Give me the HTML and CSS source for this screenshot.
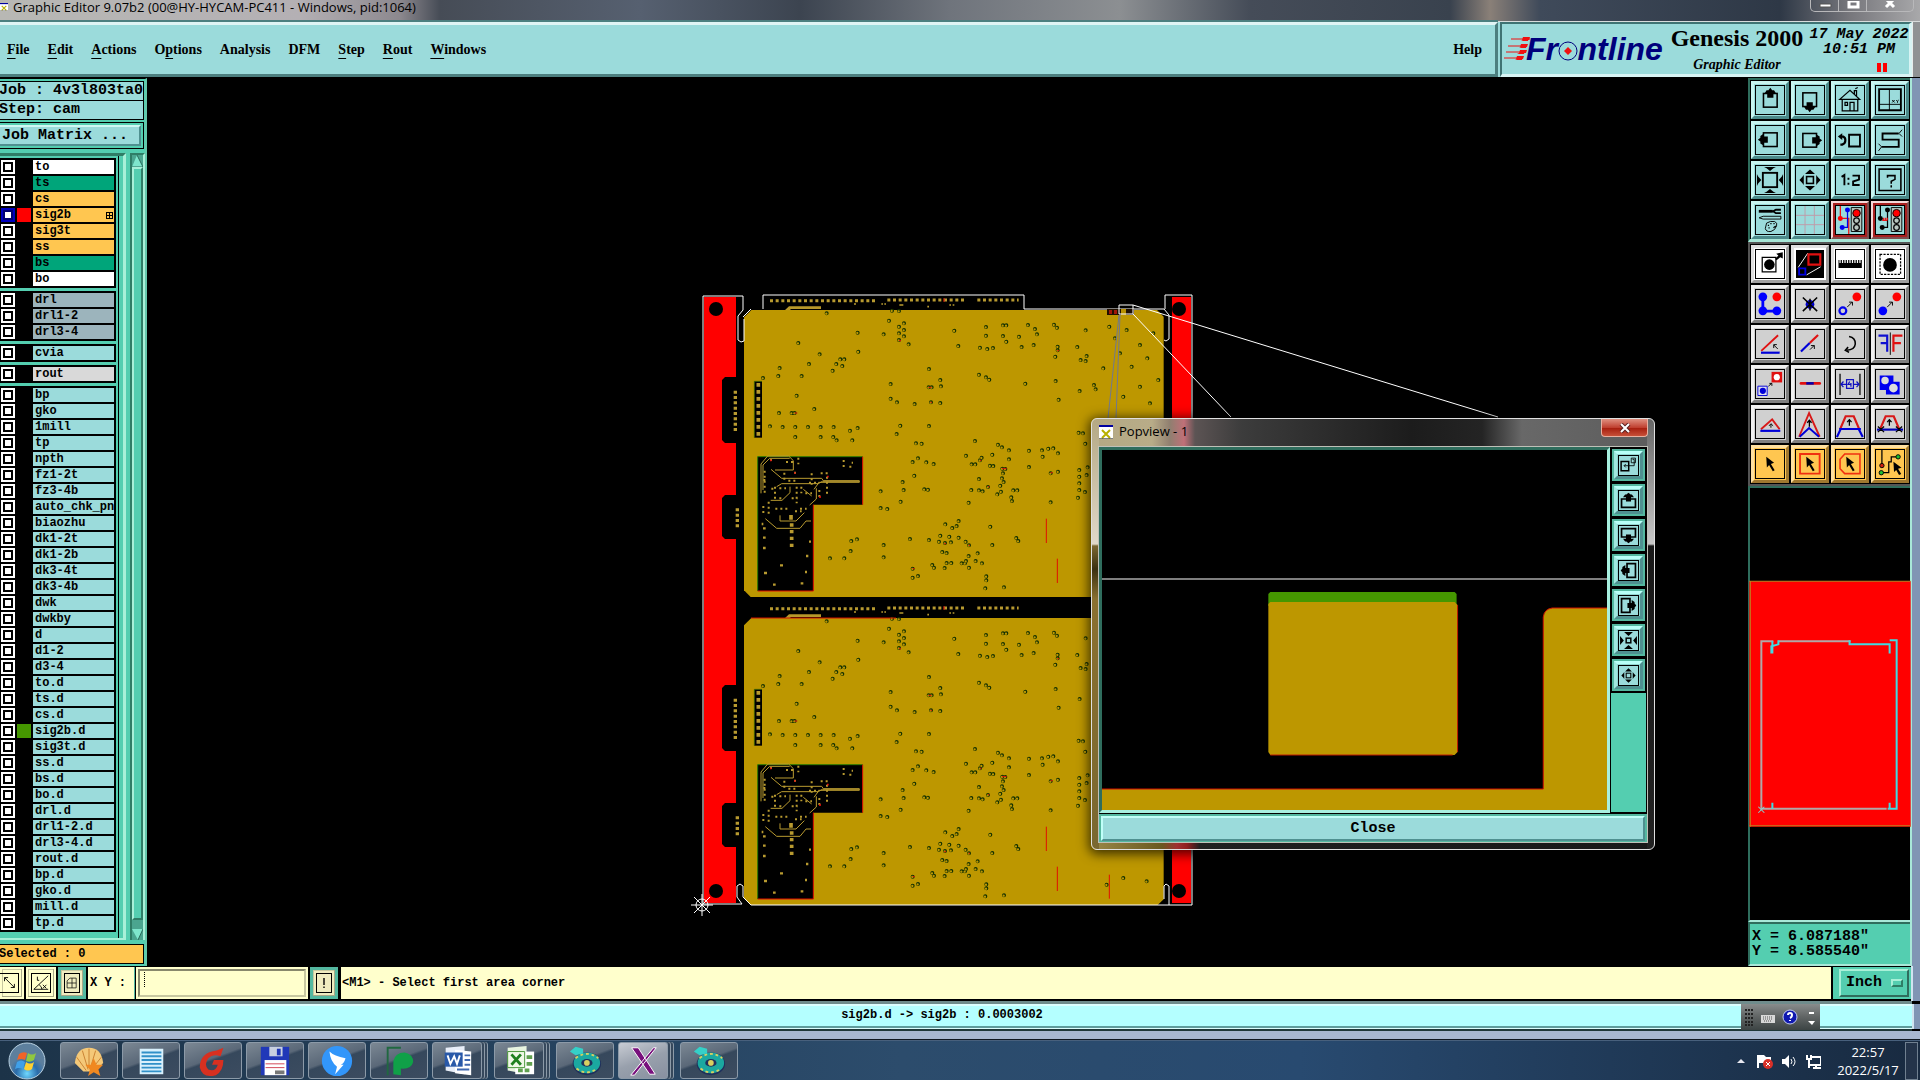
FILE: index.html
```html
<!DOCTYPE html>
<html lang="en">
<head>
<meta charset="utf-8">
<title>Graphic Editor 9.07b2</title>
<link rel="stylesheet" href="styles.css">
</head>
<body>
<svg class="defs" aria-hidden="true">
  <symbol id="i-up" viewBox="0 0 90 90"><rect x="24" y="24" width="44" height="44" fill="none" stroke="#000" stroke-width="5"/><path d="M46 6l6 8h6l6 9h-8v15H36V23h-8l6-9h6z"/></symbol>
  <symbol id="i-upb" viewBox="0 0 90 90"><path d="M12 38h66v40H12z" fill="none" stroke="#000" stroke-width="8"/><path d="M45 8l10 8h6l10 14H57v20H33V30H19l10-14h6z"/></symbol>
  <symbol id="i-in" viewBox="0 0 90 90"><rect x="22" y="22" width="46" height="46" fill="none" stroke="#000" stroke-width="6"/><path d="M26 3h38l-8 4-11 9-11-9zM26 87h38l-8-4-11-9-11 9zM3 26v38l4-8 10-11L7 34zM87 26v38l-4-8-10-11 10-11z"/></symbol>
  <symbol id="i-out" viewBox="0 0 90 90"><rect x="34" y="34" width="22" height="22" fill="none" stroke="#000" stroke-width="5"/><path d="M45 11l10 9 6 6H29l6-6zM45 79l10-9 6-6H29l6 6zM11 45l9-10 5-6v32l-5-6zM79 45l-9-10-5-6v32l5-6z"/></symbol>
  <symbol id="i-cur" viewBox="0 0 90 90"><path d="M33 22l25 19-10 4 12 20-6 3-12-20-7 8z"/></symbol>
  <symbol id="i-x" viewBox="0 0 14 14"><path d="M0 0h14v14H0z" fill="#fff"/><path d="M0 0h14v2H0z" fill="#0000a0"/><path d="M3 5l8 8M11 5l-8 8" stroke="#b8b000" stroke-width="2"/><path d="M0 14h14" stroke="#000"/></symbol>
  <symbol id="i-disc" viewBox="0 0 36 36"><ellipse cx="20" cy="21" rx="15" ry="12" fill="#20305c"/><ellipse cx="20" cy="20" rx="14" ry="11" fill="#1ba8a0"/><path d="M8 15q12-9 24 0M9 26q11 8 22 0" stroke="#d8d060" stroke-width="2" stroke-dasharray="3 3" fill="none"/><ellipse cx="20" cy="20" rx="6" ry="4" fill="#20305c"/><circle cx="20" cy="20" r="3" fill="#d8d060"/><path d="M2 8l6-5 8 2v5l-8 2z" fill="#35d0c8"/></symbol>
</svg>

<header class="titlebar">
  <svg class="app-icon" viewBox="0 0 14 14"><use href="#i-x"/></svg>
  <h1>Graphic Editor 9.07b2 (00@HY-HYCAM-PC411 - Windows, pid:1064)</h1>
  <div class="winctl">
    <button aria-label="Minimize"><svg viewBox="0 0 14 10"><path d="M2 3h11v3H2z" fill="#fff" stroke="#555"/></svg></button>
    <button aria-label="Restore"><svg viewBox="0 0 14 10"><path d="M3 0h9v6H3z" fill="none" stroke="#fff" stroke-width="3"/></svg></button>
    <button aria-label="Close window" class="wide"><svg viewBox="0 0 14 10"><path d="M3-2l8 8M11-2L3 6" stroke="#fff" stroke-width="3"/></svg></button>
  </div>
</header>

<div class="window">
<div class="topbar">
  <nav class="menubar">
    <a href="#"><u>F</u>ile</a><a href="#"><u>E</u>dit</a><a href="#"><u>A</u>ctions</a><a href="#">O<u>p</u>tions</a><a href="#">Analysis</a><a href="#">DFM</a><a href="#"><u>S</u>tep</a><a href="#"><u>R</u>out</a><a href="#"><u>W</u>indows</a><a href="#" class="help">Help</a>
  </nav>
  <div class="brand">
    <svg class="logo" viewBox="0 0 162 32">
      <path d="M5 5h19M2 12h19M0 18h19M-2 24h19" stroke="#f01010" stroke-width="1"/>
      <path d="M15 7l8-4-1 4zM13 14l8-4-1 4zM11 20l8-4-1 4zM9 26l8-4-1 4zM17 3h7l-1 3h-7zM15 10h7l-1 3h-7zM14 16h7l-1 3h-7zM11 22h7l-1 3h-7z" fill="#f01010"/>
      <text x="20" y="26" font-size="32">Fr<tspan fill="none">o</tspan>ntline</text>
      <circle cx="62" cy="17" r="9" fill="none" stroke="#00007c" stroke-width="1"/><path d="M62 13l4 4-4 4-4-4z" fill="#f01010"/>
    </svg>
    <div class="product"><strong>Genesis 2000</strong><em>Graphic Editor</em></div>
    <div class="clock"><span>17 May 2022</span><span>10:51 PM</span><i class="pause"></i></div>
  </div>
</div>

<main class="main">
  <aside class="sidebar">
    <div class="info"><p>Job : 4v3l803ta0</p><p>Step: cam</p></div>
    <div class="jm"><button>Job Matrix ...</button></div>
    <div class="lists">
      <div class="listframe"><div class="list">
        <div class="group">
          <label><input type="checkbox"><i></i><span class="w">to</span></label>
          <label><input type="checkbox"><i></i><span class="g">ts</span></label>
          <label><input type="checkbox"><i></i><span class="o">cs</span></label>
          <label><input type="checkbox" class="active"><i class="red"></i><span class="o grid">sig2b</span></label>
          <label><input type="checkbox"><i></i><span class="o">sig3t</span></label>
          <label><input type="checkbox"><i></i><span class="o">ss</span></label>
          <label><input type="checkbox"><i></i><span class="g">bs</span></label>
          <label><input type="checkbox"><i></i><span class="w">bo</span></label>
        </div>
        <div class="group">
          <label><input type="checkbox"><i></i><span class="d">drl</span></label>
          <label><input type="checkbox"><i></i><span class="d">drl1-2</span></label>
          <label><input type="checkbox"><i></i><span class="d">drl3-4</span></label>
        </div>
        <div class="group"><label><input type="checkbox"><i></i><span>cvia</span></label></div>
        <div class="group"><label><input type="checkbox"><i></i><span class="r">rout</span></label></div>
        <div class="group">
          <label><input type="checkbox"><i></i><span>bp</span></label>
          <label><input type="checkbox"><i></i><span>gko</span></label>
          <label><input type="checkbox"><i></i><span>1mill</span></label>
          <label><input type="checkbox"><i></i><span>tp</span></label>
          <label><input type="checkbox"><i></i><span>npth</span></label>
          <label><input type="checkbox"><i></i><span>fz1-2t</span></label>
          <label><input type="checkbox"><i></i><span>fz3-4b</span></label>
          <label><input type="checkbox"><i></i><span>auto_chk_pnl</span></label>
          <label><input type="checkbox"><i></i><span>biaozhu</span></label>
          <label><input type="checkbox"><i></i><span>dk1-2t</span></label>
          <label><input type="checkbox"><i></i><span>dk1-2b</span></label>
          <label><input type="checkbox"><i></i><span>dk3-4t</span></label>
          <label><input type="checkbox"><i></i><span>dk3-4b</span></label>
          <label><input type="checkbox"><i></i><span>dwk</span></label>
          <label><input type="checkbox"><i></i><span>dwkby</span></label>
          <label><input type="checkbox"><i></i><span>d</span></label>
          <label><input type="checkbox"><i></i><span>d1-2</span></label>
          <label><input type="checkbox"><i></i><span>d3-4</span></label>
          <label><input type="checkbox"><i></i><span>to.d</span></label>
          <label><input type="checkbox"><i></i><span>ts.d</span></label>
          <label><input type="checkbox"><i></i><span>cs.d</span></label>
          <label><input type="checkbox"><i class="green"></i><span>sig2b.d</span></label>
          <label><input type="checkbox"><i></i><span>sig3t.d</span></label>
          <label><input type="checkbox"><i></i><span>ss.d</span></label>
          <label><input type="checkbox"><i></i><span>bs.d</span></label>
          <label><input type="checkbox"><i></i><span>bo.d</span></label>
          <label><input type="checkbox"><i></i><span>drl.d</span></label>
          <label><input type="checkbox"><i></i><span>drl1-2.d</span></label>
          <label><input type="checkbox"><i></i><span>drl3-4.d</span></label>
          <label><input type="checkbox"><i></i><span>rout.d</span></label>
          <label><input type="checkbox"><i></i><span>bp.d</span></label>
          <label><input type="checkbox"><i></i><span>gko.d</span></label>
          <label><input type="checkbox"><i></i><span>mill.d</span></label>
          <label><input type="checkbox"><i></i><span>tp.d</span></label>
        </div>
      </div></div>
      <div class="scroll">
        <button aria-label="Scroll up"><svg viewBox="0 0 11 12"><path d="M5 0L0 12h11z" fill="#7fe6cc"/><path d="M5 0l6 12H0" fill="none" stroke="#2b6b5b"/></svg></button>
        <div class="thumb"></div>
        <button aria-label="Scroll down"><svg viewBox="0 0 11 12"><path d="M0 1h11L6 12z" fill="#7fe6cc"/><path d="M11 1L6 12" stroke="#2b6b5b"/></svg></button>
      </div>
    </div>
    <div class="selected">Selected : 0</div>
  </aside>

  <section class="canvas">
    <svg class="board" viewBox="147 78 1601 888">
      <path d="M704 297h32v606h-32zM1172 297h19v606h-19z" fill="#f00"/>
      <g><circle cx="716" cy="309" r="7"/><circle cx="716" cy="891" r="7"/><circle cx="1179" cy="309" r="7"/><circle cx="1179" cy="891" r="7"/></g>
      <path d="M736 377h-11l-3 3v60l3 3h11zM736 495h-11l-3 3v38l3 3h11zM736 685h-11l-3 3v60l3 3h11zM736 803h-11l-3 3v38l3 3h11z"/>
      <defs>
      <path id="vias" d="M503 158h0M325 189h0M389 223h0M505 215h0M357 252h0M269 264h0M265 288h0M335 288h0M320 347h0M219 294h0M373 387h0M267 399h0M305 399h0M314 399h0M410 100h0M240 439h0M278 441h0M316 441h0M354 441h0M392 441h0M431 441h0M316 471h0M392 471h0M430 471h0M440 481h0M487 481h0M480 452h0M503 444h0M428 272h0M439 252h0M451 238h0M463 238h0M457 258h0M597 122h0M581 163h0M627 93h0M606 92h0M642 130h0M642 150h0M642 169h0M627 140h0M627 160h0M627 180h0M656 193h0M793 152h0M805 198h0M888 141h0M888 167h0M939 136h0M949 136h0M939 168h0M949 185h0M870 203h0M892 207h0M909 204h0M1014 135h0M1035 147h0M1041 163h0M987 170h0M995 201h0M1031 195h0M1092 134h0M1101 143h0M1187 151h0M1103 200h0M1103 211h0M1096 230h0M1162 201h0M1190 228h0M1172 240h0M1187 243h0M717 267h0M751 300h0M753 319h0M716 322h0M725 322h0M867 284h0M888 292h0M898 299h0M1006 311h0M1097 303h0M1169 333h0M1212 315h0M1217 328h0M602 312h0M602 356h0M621 367h0M674 372h0M723 367h0M751 369h0M1106 359h0M631 437h0M717 438h0M620 462h0M678 490h0M695 491h0M668 546h0M684 535h0M709 547h0M731 552h0M673 587h0M638 606h0M641 630h0M703 628h0M714 629h0M632 665h0M572 634h0M572 684h0M592 687h0M855 483h0M924 494h0M936 502h0M957 511h0M907 524h0M875 533h0M870 541h0M828 527h0M845 553h0M856 553h0M900 557h0M910 558h0M957 538h0M937 566h0M946 567h0M939 580h0M936 595h0M941 606h0M931 617h0M894 621h0M867 597h0M867 631h0M878 634h0M844 630h0M836 668h0M922 643h0M933 635h0M970 631h0M982 631h0M964 652h0M966 663h0M1017 512h0M1017 561h0M1056 511h0M1058 530h0M1075 506h0M1090 505h0M1104 520h0M1082 580h0M1104 575h0M1082 667h0M1186 491h0M1166 458h0M1179 460h0M1168 570h0M1168 590h0M1168 610h0M1168 630h0M1164 653h0M1185 636h0M1193 562h0M1190 585h0M501 778h0M484 783h0M482 813h0M463 835h0M420 835h0M581 795h0M581 832h0M660 777h0M717 780h0M766 733h0M787 744h0M800 738h0M806 723h0M751 767h0M778 770h0M747 785h0M765 789h0M783 787h0M806 773h0M827 785h0M837 796h0M757 816h0M770 819h0M836 828h0M863 820h0M828 843h0M857 843h0M876 850h0M770 849h0M784 849h0M815 850h0M825 850h0M727 855h0M732 863h0M764 864h0M837 863h0M668 866h0M668 893h0M684 888h0M901 740h0M907 795h0M979 774h0M985 783h0M889 889h0M889 901h0M886 925h0M942 922h0M1240 265h0M1258 140h0M1275 175h0M1290 220h0M1310 150h0M1325 260h0M1350 195h0M1372 235h0M1390 160h0M1405 300h0M1350 320h0M1300 350h0M1380 370h0M1250 890h0M1300 870h0M1370 880h0"/>
      <g id="unit">
        <path d="M162 112l22-22h1217l20 20v824l-18 17H182l-20-20z" fill="#bd9700"/>
        <path d="M285 90l12-11h96v8h-90l-4 4z" fill="#b8982a"/>
        <path d="M240 62H562M592 60H830M862 60H986" stroke="#b89a30" stroke-width="9" stroke-dasharray="9 8"/>
        <path d="M492 72h6M574 72h5M583 72h5M628 75h12M712 80h5M778 75h5M788 75h5" stroke="#b89a30" stroke-width="5"/>
        <path d="M762 55v10" stroke="#d02010" stroke-width="4"/>
        <path d="M136 332v128M142 685v58" stroke="#b89a30" stroke-width="10" stroke-dasharray="9 7"/>
        <g class="ring"><use href="#vias" stroke="#123000" stroke-width="12"/><use href="#vias" stroke="#bd9700" stroke-width="7" transform="translate(-1 1)"/></g>
        <path d="M314 399h8M716 322h8M936 566h14M1082 578h6M722 367h4M627 182h6M1102 212h5M870 541h4M836 796h4M668 866h6M763 791h5M894 620h4" stroke="#e01010" stroke-width="3"/>
        <path d="M193 304h23v169h-23z"/><path d="M193 473V304h23" fill="none" stroke="#3a7000" stroke-width="2"/>
        <path d="M205 309v160" stroke="#b89a30" stroke-width="11" stroke-dasharray="11 10"/>
        <path d="M203 530h315v144H370v259H203z"/>
        <path d="M203 933V530h315" fill="none" stroke="#2f7a00" stroke-width="3"/><path d="M518 530v144M370 674v259H203" fill="none" stroke="#e01000" stroke-width="3"/>
        <g fill="none" stroke="#b89a30" stroke-width="3"><path d="M213 640v-88l20-24h63l14 14v28h-55M219 630v-75l20-20h60M243 568l32 27h120l5 7h108v5H385M260 620l15-9h110l12-7h110M300 620v18l-24 23h-34M340 628l25 20M379 625v32l-20 18M270 706v17h48l25-25M226 716l34 29h70l18-22h15M388 606l-16 22"/></g>
        <path d="M224 572v70M240 540h10M288 546h25M325 533v20M255 620v40M355 567h0M283 578v30M295 602h25M312 578h10M320 620v50M334 620v20M357 608h30M365 580v34M392 580h25M411 590v60M388 630v25M305 655h18M220 678v30M236 665v40M256 686h40M271 652v12M315 694h20M330 686h20M461 540v25M478 560h8M507 536h0M485 548h4M346 640h20M220 600h10M268 625h20M244 626h10" stroke="#b89a30" stroke-width="6" stroke-dasharray="6 9"/>
        <path d="M303 705v14M305 730v10M305 750v10M305 770v10M305 791v10" stroke="#b89a30" stroke-width="11"/>
        <path d="M219 745h8M219 773h8M219 804h8M222 879h9M249 914h8M270 856h9M332 910h8M348 828h7M357 785h6M345 876h6M215 732h5" stroke="#b89a30" stroke-width="7"/>
        <path d="M312 579h5M240 541h5M411 590h5M390 648v6" stroke="#e01010" stroke-width="5"/>
        <path d="M1069 716v73M1102 836v73M1258 860v72" stroke="#e01000" stroke-width="3"/>
      </g>
      </defs>
      <svg x="690" y="280" width="480" height="340" viewBox="0 0 1440 1020"><use href="#unit"/></svg>
      <svg x="690" y="588" width="480" height="340" viewBox="0 0 1440 1020"><use href="#unit"/></svg>
      <path d="M751 618h145" stroke="#d01000"/>
      <path d="M703 905V296h40v14l-5 6v24l3 2 3-1v-22M751 309l-8 8M763 309V295h261v14h140M1164 309l5 6v24l-3 2-2-1M1165 309v-14h27v610H751l-8-8v-11l-3-2-3 2v11l5 7h-38M1169 905v-19l-3-2-2 2v13" fill="none" stroke="#fff"/>
      <path d="M1107 309h27v6h-27z" fill="#201000"/><path d="M1109 310h3v4h-3zM1114 310h3v4h-3z" fill="#a01808"/><path d="M1121 309h5v6h-5z" fill="#b89000"/>
      <path d="M1119 305h14v9h-14zM1133 305l365 112M1133 314l98 103" fill="none" stroke="#fff"/>
      <path d="M1119 315l-11 103M1120 315l-4 103" stroke="#707890" fill="none"/>
      <g fill="none" stroke="#fff"><circle cx="702" cy="905" r="6"/><path d="M691 905h22M702 894v22M694 897l16 16M710 897l-16 16"/></g>
    </svg>

    <section class="popview" aria-label="Popview">
      <div class="pop-title"><svg viewBox="0 0 14 14"><use href="#i-x"/></svg><h2>Popview - 1</h2><button aria-label="Close popview"><svg viewBox="0 0 12 10"><path d="M2 1l8 8M10 1L2 9" stroke="#5a2020" stroke-width="4"/><path d="M2 1l8 8M10 1L2 9" stroke="#fff" stroke-width="2"/></svg></button></div>
      <div class="pop-body">
        <svg class="pop-canvas" viewBox="0 0 507 360" preserveAspectRatio="none">
          <path d="M0 129h507" stroke="#fff"/>
          <path d="M167 144l2-2h185l2 2v12H167z" fill="#459700"/>
          <path d="M167 154l2-2h185l3 3v147l-3 3H169l-2-3z" fill="#bd9700"/>
          <path d="M357 155v147M169 305h183" stroke="#c01800" fill="none"/>
          <path d="M0 339h443V167q1-8 9-9h55v202H0z" fill="#bd9700"/><path d="M0 339h443V167q1-8 9-9h55" fill="none" stroke="#d01000"/>
        </svg>
        <div class="pop-tools">
          <div><button aria-label="Pan window"><svg viewBox="0 0 90 90"><path d="M10 26h36v44H10z" fill="none" stroke="#000" stroke-width="7"/><path d="M58 10h20v22H58zM64 16h8v30H24M32 38l-8 8 8 8" fill="none" stroke="#000" stroke-width="4"/></svg></button></div>
          <div><button aria-label="Pan up"><svg><use href="#i-upb"/></svg></button></div>
          <div><button aria-label="Pan down"><svg class="r180"><use href="#i-upb"/></svg></button></div>
          <div><button aria-label="Pan left"><svg class="r270"><use href="#i-upb"/></svg></button></div>
          <div><button aria-label="Pan right"><svg class="r90"><use href="#i-upb"/></svg></button></div>
          <div><button aria-label="Zoom in"><svg viewBox="0 0 90 90"><rect x="34" y="34" width="22" height="22" fill="none" stroke="#000" stroke-width="7"/><path d="M24 5h42L45 24zM24 85h42L45 66zM5 24v42l18-21zM85 24v42L67 45z"/></svg></button></div>
          <div><button aria-label="Zoom out"><svg><use href="#i-out"/></svg></button></div>
        </div>
        <div class="pop-close"><button>Close</button></div>
      </div>
    </section>
  </section>

  <aside class="right">
    <div class="tools cyan">
      <button aria-label="Pan up"><svg><use href="#i-up"/></svg></button>
      <button aria-label="Pan down"><svg class="r180"><use href="#i-up"/></svg></button>
      <button aria-label="Home"><svg viewBox="0 0 90 90" fill="none" stroke="#000" stroke-width="4"><path d="M12 43L45 14l31 29zM20 43v37h50V43M29 53h8v9h-8zM45 80V53h13v27M59 26V15h7v19M62 9l8-4"/></svg></button>
      <button aria-label="Coordinates"><svg viewBox="0 0 90 90"><path d="M10 10h70v68H10z" fill="none" stroke="#000" stroke-width="6"/><path d="M43 10v68M10 59h70M52 45l8 8M60 45l-8 8M65 45l4 4 4-4M69 49v5" fill="none" stroke="#000" stroke-width="3"/></svg></button>
      <button aria-label="Pan left"><svg class="r270"><use href="#i-up"/></svg></button>
      <button aria-label="Pan right"><svg class="r90"><use href="#i-up"/></svg></button>
      <button aria-label="Previous view"><svg viewBox="0 0 90 90" fill="none" stroke="#000"><path d="M42 28h35v38H42z" stroke-width="6"/><path d="M14 34h9q8 4 7 13 0 10-10 13h-6" stroke-width="7"/><path d="M6 34l14-11v22z" fill="#000" stroke="none"/></svg></button>
      <button aria-label="Serpentine"><svg viewBox="0 0 90 90" fill="none" stroke="#000"><path d="M73 24H21v20h52v23H18" stroke-width="6"/><path d="M84 12l-10 12 10 10M8 57l10 10L8 80" stroke-width="3"/></svg></button>
      <button aria-label="Zoom in"><svg><use href="#i-in"/></svg></button>
      <button aria-label="Zoom out"><svg><use href="#i-out"/></svg></button>
      <button aria-label="Scale"><svg viewBox="0 0 90 90" fill="none" stroke="#000" stroke-width="6"><path d="M18 35l9-6v33M40 38v6M40 54v6M53 31h21v13l-19 6v11h21"/></svg></button>
      <button aria-label="Query"><svg viewBox="0 0 90 90" fill="none" stroke="#000" stroke-width="5"><path d="M10 10h70v69H10z"/><path d="M37 38v-7h24v12l-12 6v8M49 62v7"/></svg></button>
      <button aria-label="Setup"><svg viewBox="0 0 90 90" fill="none" stroke="#000"><path d="M9 17h45" stroke-width="9"/><path d="M80 12H64l-9 5 9 6h16" stroke-width="6"/><path d="M10 38l13-5h57v9H23z" stroke-width="3"/><path d="M30 72l4-17q12-8 26-5 10 4 6 14-4 14-18 18-16 2-18-10z" stroke-width="3"/><path d="M38 62h4M46 57h4M56 57h4M40 70h4M56 70l8-6" stroke-width="4"/></svg></button>
      <button aria-label="Grid"><svg viewBox="0 0 90 90"><path d="M29 0v90M59 0v90M0 30h90M0 60h90" stroke="#c09aa8" stroke-width="3"/></svg></button>
      <button aria-label="Net check" class="alert"><svg viewBox="0 0 90 90"><path d="M14 0v40h27v50" fill="none" stroke="#f01010" stroke-width="4"/><path d="M37 13v56H20" fill="none" stroke="#0000e8" stroke-width="4"/><circle cx="14" cy="40" r="8" fill="#f00"/><g fill="#0000f0"><circle cx="37" cy="13" r="8"/><circle cx="20" cy="69" r="8"/></g><path d="M49 5h34v77H49z" fill="#b8c8c0" stroke="#000" stroke-width="3"/><circle cx="66" cy="23" r="12" fill="#f00" stroke="#000" stroke-width="3"/><g fill="none" stroke="#000" stroke-width="4"><circle cx="66" cy="47" r="9"/><circle cx="66" cy="69" r="9"/></g></svg></button>
      <button aria-label="Short check" class="alert"><svg viewBox="0 0 90 90"><path d="M14 0v40M37 13v56H20" fill="none" stroke="#000" stroke-width="4"/><path d="M20 46h16M24 46v-8M30 46v-8M36 46v-8" stroke="#f01010" stroke-width="4"/><circle cx="14" cy="40" r="8"/><circle cx="37" cy="13" r="8"/><circle cx="20" cy="69" r="8"/><path d="M49 5h34v77H49z" fill="#b8c8c0" stroke="#000" stroke-width="3"/><circle cx="66" cy="23" r="12" fill="#f00" stroke="#000" stroke-width="3"/><g fill="none" stroke="#000" stroke-width="4"><circle cx="66" cy="47" r="9"/><circle cx="66" cy="69" r="9"/></g></svg></button>
    </div>
    <div class="tools grey">
      <button class="white" aria-label="Move feature"><svg viewBox="0 0 90 90"><path d="M20 24h44v46H20z" fill="none" stroke="#000" stroke-width="4"/><circle cx="43" cy="47" r="17"/><path d="M62 28l10-10-7-6 21-5v20l-8-4-12 10z"/></svg></button>
      <button class="white dark" aria-label="Popview"><svg viewBox="0 0 90 90"><path d="M0 0h90v90H0z"/><path d="M7 56L38 10M34 80l45-26" stroke="#fff" stroke-width="3"/><path d="M40 14h38v33H40z" fill="none" stroke="#e01010" stroke-width="7"/><path d="M10 59h20v20H10z" fill="none" stroke="#0000e0" stroke-width="6"/></svg></button>
      <button class="white" aria-label="Measure"><svg viewBox="0 0 90 90"><path d="M8 32v26h75V32h-4v10h-4V32h-4v10h-4V32h-4v10h-4V32h-4v10h-4V32h-4v10h-4V32h-4v10h-4V32h-4v10h-4V32h-4v10h-4V32h-4v10h-4V32z"/></svg></button>
      <button class="white" aria-label="Select"><svg viewBox="0 0 90 90"><path d="M13 14h66v64H13z" fill="none" stroke="#000" stroke-width="4" stroke-dasharray="7 4"/><circle cx="45" cy="48" r="22"/></svg></button>
      <button aria-label="Polyline"><svg viewBox="0 0 90 90"><path d="M22 22v46h45" fill="none" stroke="#00f" stroke-width="9"/><g fill="#00f"><circle cx="22" cy="22" r="14"/><circle cx="22" cy="67" r="14"/><circle cx="67" cy="67" r="14"/></g><circle cx="67" cy="22" r="14" fill="#f00"/></svg></button>
      <button aria-label="Delete"><svg viewBox="0 0 90 90"><circle cx="45" cy="46" r="14" fill="#00c"/><path d="M22 24l46 44M68 24L22 68M45 28v38" stroke="#000" stroke-width="5"/></svg></button>
      <button aria-label="Copy"><svg viewBox="0 0 90 90"><circle cx="67" cy="22" r="14" fill="#f00"/><circle cx="22" cy="67" r="11" fill="none" stroke="#00e" stroke-width="7"/><path d="M36 55l16-16M42 39h11v11" fill="none" stroke="#000" stroke-width="3"/></svg></button>
      <button aria-label="Move"><svg viewBox="0 0 90 90"><circle cx="67" cy="22" r="14" fill="#f00"/><circle cx="22" cy="67" r="14" fill="#00f"/><path d="M36 55l16-16M42 39h11v11" fill="none" stroke="#000" stroke-width="3"/></svg></button>
      <button aria-label="Rotate"><svg viewBox="0 0 90 90"><path d="M17 67l54-50" stroke="#e01010" stroke-width="6"/><path d="M16 73h60" stroke="#0000d8" stroke-width="7"/><path d="M70 61L57 48M57 58V47h10" fill="none" stroke="#000" stroke-width="3"/></svg></button>
      <button aria-label="Stretch"><svg viewBox="0 0 90 90"><path d="M44 42l27-26" stroke="#e01010" stroke-width="7"/><path d="M16 69l28-27" stroke="#0000d8" stroke-width="7"/><path d="M45 63l13-13M48 50h11v11" fill="none" stroke="#000" stroke-width="3"/></svg></button>
      <button aria-label="Arc"><svg viewBox="0 0 90 90"><path d="M42 21q21 4 20 24-2 19-27 20M39 55L30 65l12 7" fill="none" stroke="#000" stroke-width="5"/></svg></button>
      <button aria-label="Mirror"><svg viewBox="0 0 90 90" fill="none" stroke-width="7"><path d="M8 18h28v52M15 42h20" stroke="#1010d0"/><path d="M46 8v72" stroke="#000" stroke-width="3"/><path d="M85 18H56v52M58 42h22" stroke="#e01010"/></svg></button>
      <button aria-label="Copy step"><svg viewBox="0 0 90 90"><path d="M50 6h34v34H50z" fill="#e01010"/><circle cx="67" cy="23" r="10" fill="#fff"/><path d="M6 52h30v30H6z" fill="#dde" stroke="#0000d8" stroke-width="3"/><circle cx="22" cy="67" r="10" fill="#0000d8"/><path d="M40 52l10-9M43 43h8v8" fill="none" stroke="#000" stroke-width="3"/></svg></button>
      <button aria-label="Line width"><svg viewBox="0 0 90 90"><path d="M16 43h60" stroke="#e01010" stroke-width="9" stroke-linecap="round"/><path d="M33 43h24" stroke="#0000b0" stroke-width="8"/></svg></button>
      <button aria-label="Spacing"><svg viewBox="0 0 90 90" fill="none" stroke-width="4"><path d="M13 12v68M77 12v68" stroke="#000"/><path d="M16 46h18M56 46h18M24 37l-8 9 8 9M66 37l8 9-8 9M34 31h22v28H34zM44 37l-5 9h11M48 42v12" stroke="#1010c0"/></svg></button>
      <button aria-label="Surface"><svg viewBox="0 0 90 90"><path d="M12 18h44v20h20v41H32V64H12z" fill="#0000f0"/><circle cx="29" cy="34" r="12" fill="#ddd"/><circle cx="56" cy="58" r="14" fill="#ddd"/></svg></button>
      <button aria-label="Triangle"><svg viewBox="0 0 90 90" fill="none" stroke-width="6"><path d="M16 62l36-32 24 32" stroke="#d81818"/><path d="M14 67h64" stroke="#0000d8" stroke-width="7"/><path d="M48 57V46M42 51l6-7 7 7" stroke="#000" stroke-width="3"/></svg></button>
      <button aria-label="Peak"><svg viewBox="0 0 90 90" fill="none" stroke-width="6"><path d="M10 86L42 10l34 76" stroke="#d81818"/><path d="M12 86l30-28 32 28" stroke="#0000d8"/><path d="M43 54V34M36 41l7-8 7 8" stroke="#000" stroke-width="4"/></svg></button>
      <button aria-label="Trapezoid"><svg viewBox="0 0 90 90" fill="none" stroke-width="7"><path d="M14 60l17-40h26l17 40" stroke="#d81818"/><path d="M3 87l12-26h58l13 26M10 61h70" stroke="#0000d8"/><path d="M43 51V32M36 39l7-8 7 8" stroke="#000" stroke-width="4"/></svg></button>
      <button aria-label="Trim"><svg viewBox="0 0 90 90" fill="none" stroke-width="7"><path d="M14 60l17-40h26l17 40" stroke="#d81818"/><path d="M3 63h84" stroke="#0000b0"/><path d="M6 53l20 18M26 53L6 71M64 53l20 18M84 53L64 71M43 51V32M36 39l7-8 7 8" stroke="#000" stroke-width="4"/></svg></button>
      <button class="orange" aria-label="Pick"><svg><use href="#i-cur"/></svg></button>
      <button class="orange" aria-label="Pick in frame"><svg viewBox="0 0 90 90"><path d="M13 13h63v63H13z" fill="none" stroke="#f03010" stroke-width="6"/><use href="#i-cur"/></svg></button>
      <button class="orange" aria-label="Pick in polygon"><svg viewBox="0 0 90 90"><path d="M13 30l15-17h49v63H28L13 60z" fill="none" stroke="#f03010" stroke-width="5"/><use href="#i-cur"/></svg></button>
      <button class="orange" aria-label="Pick net"><svg viewBox="0 0 90 90"><path d="M19 0v50M19 73h22V38h8V22h22" fill="none" stroke="#000" stroke-width="4"/><circle cx="19" cy="50" r="7" fill="#d02010" stroke="#000" stroke-width="3"/><circle cx="17" cy="73" r="7" fill="#20c030" stroke="#000" stroke-width="3"/><circle cx="71" cy="22" r="7" fill="#20c030" stroke="#000" stroke-width="3"/><path d="M56 38l26 19-11 3 10 17-7 3-9-16-7 7z"/></svg></button>
    </div>
    <div class="overview"><svg viewBox="1751 489 159 431">
      <path d="M1750 582h161v245h-161z" fill="#f00"/><path d="M1750 582h161M1750 826h161M1751 582v245" stroke="#c08020" fill="none"/>
      <path d="M1774 642h-12v167h125M1779 642h72" fill="none" stroke="#b0a8a8" stroke-width="2"/>
      <path d="M1779 641v4l-7 2v7M1850 641v4h40v9M1890 641h7v168h-9M1773 642v12M1773 803v6M1890 803v6" fill="none" stroke="#40dce4" stroke-width="2"/>
      <path d="M1759 807l6 6M1765 807l-6 6" stroke="#80d8d8"/>
    </svg></div>
    <div class="coords"><span>X = 6.087188"</span><span>Y = 8.585540"</span></div>
  </aside>
</main>

<div class="status">
  <button class="sb first" aria-label="Snap"><svg viewBox="0 0 20 20"><path d="M5 4l11 11M5 8V4h4M16 11v4h-4" fill="none" stroke="#000"/></svg></button>
  <button class="sb" aria-label="Angle"><svg viewBox="0 0 20 20"><path d="M2 17L18 2M2 17h16M6 3v4h2M8 12q3 2 3 5M12 12l4 4M16 12l-4 4" fill="none" stroke="#000"/></svg></button>
  <button class="sb teal" aria-label="Grid snap"><svg viewBox="0 0 20 20"><path d="M3 7l4-4h9v14H3zM3 10h13M10 3v14" fill="none" stroke="#000"/></svg></button>
  <label for="xy">X Y :</label><div class="xy"><input id="xy" type="text"><i></i></div>
  <button class="sb teal bang" aria-label="Apply"><svg viewBox="0 0 20 20"><path d="M9 3h2v10H9zM9 15h2v2H9z"/></svg></button>
  <p>&lt;M1&gt; - Select first area corner</p>
  <div class="unit"><button>Inch<i></i></button></div>
</div>
<div class="message"><p>sig2b.d -&gt; sig2b : 0.0003002</p>
  <div class="ime"><svg viewBox="0 0 79 26"><path d="M4 6h9M4 10h9M4 14h9M4 18h9M4 21h9" stroke="#222" stroke-width="2" stroke-dasharray="2 1"/><path d="M20 11h14v8H20z" fill="#d8d8d8"/><path d="M22 13h10M22 15h10M23 17h8" stroke="#555" stroke-dasharray="1 1"/><circle cx="49" cy="13" r="7" fill="#1018b0" stroke="#c0c8f0"/><path d="M47 11q0-2 2-2t2 2-2 3M49 16v1" fill="none" stroke="#fff" stroke-width="2"/><path d="M68 8h5v2h-5zM67 17h7l-3 4z" fill="#fff"/></svg></div>
</div>
</div>

<footer class="taskbar">
  <button class="start" aria-label="Start"><svg viewBox="0 0 38 38"><defs><radialGradient id="orb" cy=".85"><stop offset="0" stop-color="#6fd8ff"/><stop offset=".6" stop-color="#2a6cab"/><stop offset="1" stop-color="#5d7f9d"/></radialGradient></defs><circle cx="19" cy="19" r="18" fill="url(#orb)" stroke="#b8d0e0"/><path d="M11 12q4-3 8-1l-2 7q-4-2-8 0z" fill="#f06428"/><path d="M20 11q4 3 8 0l-2 7q-4 3-8 1z" fill="#90c840"/><path d="M9 20q4-3 8 0l-2 7q-4-2-8 0z" fill="#40a0e8"/><path d="M18 20q4 3 8 0l-2 7q-4 3-8 0z" fill="#ffd030"/></svg></button>
  <button class="app" aria-label="Shell"><svg viewBox="0 0 36 36"><path d="M18 4q13 0 15 16l-8 9H12L3 20Q5 4 18 4z" fill="#f4c878"/><path d="M18 5v20M11 7l6 20M25 7l-6 20M5 14l10 14M31 14L20 28" stroke="#c88030" stroke-width="1"/><path d="M23 15l3 7h7l-5 5 2 7-7-4-6 4 2-7-5-5h6z" fill="#f08820"/></svg></button>
  <button class="app" aria-label="Notepad"><svg viewBox="0 0 36 36"><path d="M6 5h25v27H6z" fill="#d8f0fc"/><path d="M8 9h21M8 13h21M8 17h21M8 21h21M8 25h21M8 29h21" stroke="#3090c8" stroke-width="2"/></svg></button>
  <button class="app" aria-label="Gcam"><svg viewBox="0 0 36 36"><path d="M29 4l-3 9q-8-3-13 2-5 7 0 12 8 3 10-5h-6l2-5h10q0 12-8 16-14 4-17-8 0-16 18-18z" fill="#d83020"/></svg></button>
  <button class="app" aria-label="Floppy"><svg viewBox="0 0 36 36"><path d="M3 3h30v30H3z" fill="#2038b8"/><path d="M12 3h14v10H12z" fill="#c8d0e0"/><path d="M20 5h4v7h-4z" fill="#2038b8"/><path d="M7 17h23v16H7z" fill="#fff"/><path d="M8 21h20M8 25h20" stroke="#d04050"/><path d="M18 28h10v4H18z" fill="#777"/></svg></button>
  <button class="app" aria-label="Messenger"><svg viewBox="0 0 36 36"><circle cx="18" cy="18" r="16" fill="#3296fa"/><path d="M10 8q5 5 17 7-1 5-5 7h3l-9 10 2-8q-7-5-8-16z" fill="#fff"/></svg></button>
  <button class="app" aria-label="Pads"><svg viewBox="0 0 36 36"><path d="M6 33V4h14" fill="none" stroke="#206840" stroke-width="2"/><path d="M12 32V18q2-9 12-9 9 2 9 10-2 8-13 7v7z" fill="#10a048"/></svg></button>
  <button class="app stack" aria-label="Word"><svg viewBox="0 0 36 36"><path d="M6 4l20-2v30L6 28z" fill="#e8eef8"/><path d="M16 6l17 2v25l-17-2z" fill="#fff"/><path d="M26 12h6M26 17h6M26 22h6M18 27h13" stroke="#4068b0" stroke-width="2"/><path d="M5 9h19v15H5z" fill="#2858a8"/><path d="M8 12l3 9 4-8 3 8 3-9" fill="none" stroke="#fff" stroke-width="2"/></svg></button>
  <button class="app stack" aria-label="Excel"><svg viewBox="0 0 36 36"><path d="M6 4l20-2v30L6 28z" fill="#e8f4e0"/><path d="M14 8h20v24H14z" fill="#fff"/><path d="M17 26h5v4h-5zM24 26h5v4h-5zM26 19h6v4h-6zM26 12h6v4h-6z" fill="#60a050"/><path d="M6 8h18v17H6z" fill="#f0f8e8" stroke="#409030"/><path d="M10 11l10 11M20 11L10 22" stroke="#208020" stroke-width="3"/></svg></button>
  <button class="app" aria-label="Genesis"><svg><use href="#i-disc"/></svg></button>
  <button class="app stack on" aria-label="X server"><svg viewBox="0 0 36 36"><path d="M6 4h7l18 28h-6zM29 4h3L9 33H5z" fill="#78107c" stroke="#fff" stroke-width="1"/></svg></button>
  <button class="app" aria-label="Genesis editor"><svg><use href="#i-disc"/></svg></button>
  <div class="tray">
    <svg viewBox="0 0 84 20"><path d="M0 12l4-4 4 4z" fill="#e8e8f0"/><path d="M21 4v13" stroke="#fff" stroke-width="2"/><path d="M22 4h5l2 2h5v7h-6l-2-1h-4z" fill="#fff"/><circle cx="31" cy="13" r="5" fill="#d83028"/><path d="M29 11l4 4M33 11l-4 4" stroke="#fff" stroke-width="1"/><path d="M45 8h3l4-4v13l-4-4h-3z" fill="#fff"/><path d="M54 8q2 3 0 5M56 6q4 5 0 9" fill="none" stroke="#fff"/><path d="M74 6h10v8H73M76 17h8M79 14v3M70 4v4h4V4M72 8v9" fill="none" stroke="#fff" stroke-width="2"/></svg>
    <time><span>22:57</span><span>2022/5/17</span></time>
    <button class="desk" aria-label="Show desktop"></button>
  </div>
</footer>
</body>
</html>
```
FILE: styles.css
```css
* { box-sizing: border-box; }
body, h1, h2, p { margin: 0; }
body {
  min-height: 100vh;
  display: flex;
  flex-direction: column;
  background: #000;
  color: #000;
  font: bold 12px/14px "Liberation Mono", monospace;
}
button, input { font: inherit; color: inherit; border: 0; padding: 0; margin: 0; background: none; border-radius: 0; }
svg { display: block; }
.defs { position: absolute; width: 0; height: 0; }

/* Window title */
.titlebar {
  height: 22px;
  display: flex;
  align-items: flex-start;
  border-bottom: 1px solid #d8dcdc;
  background: linear-gradient(90deg, #b8b8b4 0, #b4b0b4 300px, #8c888e 400px, #464c56 440px, #566070 640px, #3c4450 800px, #6f747c 950px, #8c8f92 1120px, #454c58 1250px, #39424e 1450px, #8a8078 1490px, #3f4a5a 1540px, #2e3846 1780px, #77777c 1850px, #a8a8aa 100%);
}
.app-icon { width: 8px; height: 14px; flex: none; }
.titlebar h1 { margin-left: 5px; font: 13px/14px "Open Sans", sans-serif; white-space: nowrap; }
.winctl { margin: 0 6px 0 auto; display: flex; border: 1px solid #b8b8ba; border-top: 0; border-radius: 0 0 5px 5px; height: 12px; }
.winctl button { width: 28px; border-right: 1px solid #b8b8ba; display: grid; place-items: center; }
.winctl .wide { width: 46px; border: 0; }
.winctl svg { width: 14px; height: 10px; }

.window { flex: 1; display: flex; flex-direction: column; border-bottom: 8px solid #a8b8d0; }

/* Menu and brand */
.topbar { display: flex; height: 56px; margin-right: 8px; background: #9bdbdb; border-bottom: 1px solid #000; position: relative; }
.topbar::after { content: ""; position: absolute; left: 100%; top: 0; width: 8px; height: 100%; background: #909294; border-left: 1px solid #e8ecec; }
.menubar {
  flex: 1;
  display: flex;
  align-items: center;
  gap: 18px;
  padding: 0 13px 0 7px;
  border-top: 3px solid #e0f4f4;
  border-right: 3px solid #4c7f7f;
  border-bottom: 3px solid #4c7f7f;
  box-shadow: 0 -2px 0 #4c7f7f;
  font: bold 14px/18px "Liberation Serif", serif;
}
.menubar a { color: inherit; text-decoration: none; }
.menubar u { text-underline-offset: 4px; text-decoration-thickness: 1px; }
.menubar .help { margin-left: auto; }
.brand {
  display: flex;
  width: 412px;
  margin-left: 2px;
  border: 2px solid #3f7373;
  border-right: 3px solid #d8f4f4;
  border-bottom: 3px solid #d8f4f4;
  padding-left: 4px;
}
.logo { width: 162px; height: 32px; margin-top: 10px; overflow: visible; }
.logo text { font: italic bold 32px "Liberation Sans", sans-serif; fill: #00007c; }
.product { width: 138px; text-align: center; white-space: nowrap; display: flex; flex-direction: column; }
.product strong { font: bold 24px/28px "Liberation Serif", serif; }
.product em { font: italic bold 14px/18px "Liberation Serif", serif; margin-top: 4px; }
.clock { flex: 1; padding: 3px 0 0 3px; font: italic bold 15px/15px "Liberation Mono", monospace; display: flex; flex-direction: column; align-items: center; white-space: nowrap; }
.pause { width: 10px; height: 9px; border: solid #f00; border-width: 0 4px; margin: 6px 0 0 46px; }

/* Work area */
.main { flex: 1; display: flex; border-right: 8px solid #8095b4; }
.sidebar { width: 147px; background: #54ceb0; display: flex; flex-direction: column; border-right: 2px solid #64c8ac; border-top: 1px solid #000; }
.info { margin: 2px 1px 0 0; border: 1px solid #000; border-left: 0; font-size: 15px; line-height: 18px; }
.info p { background: #9bdbdb; white-space: nowrap; height: 18px; text-indent: -1px; }
.info p + p { border-top: 1px solid #000; height: 19px; }
.jm { margin: 2px 1px 4px 0; border: 1px solid #000; border-left: 0; padding: 2px 2px 2px 0; }
.jm button { display: block; width: 100%; height: 21px; text-align: left; padding-left: 2px; background: #9bdbdb; border: 2px solid #4f9090; border-left: 0; border-top-color: #d0f8f4; font-size: 15px; line-height: 17px; }
.lists { flex: 1; display: flex; gap: 4px; }
.listframe { width: 126px; border-top: 3px solid #2f7d66; border-right: 3px solid #a8f0d8; border-bottom: 2px solid #a8f0d8; padding-right: 4px; }
.list { border-right: 1px solid #000; height: 100%; padding-top: 2px; }
.group { background: #000; width: 116px; margin-bottom: 3px; padding: 2px 2px 2px 1px; display: grid; gap: 2px; }
.group label { display: grid; grid-template-columns: 14px 14px 81px; gap: 2px; height: 14px; }
.group input { appearance: none; width: 14px; height: 14px; background: #fff; border: 2px solid #fff; box-shadow: inset 0 0 0 2px #000; }
.group .active { border-color: #0000c0; box-shadow: inset 0 0 0 2px #000070; }
.group span { background: #9bdbdb; padding-left: 2px; line-height: 14px; overflow: hidden; white-space: nowrap; }
.group .w { background: #fff; }
.group .g { background: #00a57a; }
.group .o { background: #ffc650; }
.group .d { background: #9cb4bc; }
.group .r { background: #d9d9d9; }
.group .grid { display: flex; justify-content: space-between; align-items: center; padding-right: 1px; }
.grid::after { content: ""; width: 5px; height: 5px; border: 1px solid #000; background: linear-gradient(#000, #000) center / 1px 100% no-repeat, linear-gradient(#000, #000) center / 100% 1px no-repeat; }
.red { background: #f00; }
.green { background: #459700; }
.scroll { width: 15px; display: flex; flex-direction: column; background: #4ba58f; border: 2px solid #2f7d66; border-right-color: #a8f0d8; border-bottom: 0; }
.scroll button, .scroll svg { width: 11px; height: 12px; }
.thumb { flex: 1; background: #54ceb0; border: 2px solid #2f7d66; border-top-color: #a8f0d8; border-left-color: #a8f0d8; margin-bottom: 8px; }
.selected { height: 20px; margin: 4px 1px 2px 0; border: 1px solid #000; border-left: 0; background: #ffc650; line-height: 18px; text-indent: -1px; }

.canvas { flex: 1; position: relative; background: #000; min-width: 0; contain: size; }
.board { width: 100%; height: 100%; }
.ring { fill: none; stroke-linecap: round; }

/* Magnifier window floating over the board */
.popview {
  position: absolute;
  left: 944px;
  top: 340px;
  width: 564px;
  height: 432px;
  padding: 0 6px 6px;
  display: flex;
  flex-direction: column;
  border: 1px solid #e0e0e0;
  border-radius: 6px;
  box-shadow: 0 2px 12px 2px rgba(0, 0, 0, .7);
  background:
    linear-gradient(#b4a884, #e0d8c8 125px, #7a6630 127px, #3a3010 150px, #8a7030 180px, #7a6830) left / 7px 100% no-repeat,
    linear-gradient(#666, #c8c8c8 125px, #181818 127px, #222) right / 7px 100% no-repeat,
    linear-gradient(90deg, #9a8848 0, #6a5820 70px, #a03030 85px, #902020 95px, #202020 108px, #181818 100%) bottom / 100% 7px no-repeat,
    linear-gradient(90deg, #b4a884 0, #b8ac88 60px, #907f70 78px, #c07078 92px, #5c5454 103px, #3c3c3c 150px, #1c1c1c 320px, #242424 390px, #686868 430px, #5c5c5c 100%);
}
.pop-title { height: 27px; display: flex; align-items: flex-start; }
.pop-title > svg { width: 14px; height: 14px; margin: 6px 6px 0 1px; }
.pop-title h2 { font: 13px/18px "Open Sans", sans-serif; margin-top: 3px; }
.pop-title button { margin-left: auto; width: 47px; height: 18px; border: 1px solid #e8b0a0; border-top: 0; border-radius: 0 0 4px 4px; background: linear-gradient(#e09080, #c04030 50%, #a82010 55%, #c85038); display: grid; place-items: center; }
.pop-title button svg { width: 12px; height: 10px; }
.pop-body { flex: 1; display: grid; grid-template-columns: 1fr 37px; grid-template-rows: 1fr 29px; background: #000; border: 1px solid #c0c0b8; min-height: 0; }
.pop-canvas { width: 100%; height: 100%; min-height: 0; border: 3px solid #2f6d5d; border-right-color: #a8f0e0; border-bottom-color: #a8f0e0; background: #000; }
.pop-tools { background: #54ceb0; border: 1px solid #000; }
.pop-tools div { height: 35px; border: 1px solid #000; border-bottom-width: 2px; background: #54b8a0; padding: 2px; }
.pop-tools button { display: grid; place-items: center; width: 29px; height: 28px; background: #8fd4d0; border: 3px solid #4f9090; border-top-color: #b8fff8; border-left-color: #a0e8e0; margin: 0 auto; }
.pop-tools svg { width: 21px; height: 21px; border: 1px solid #000; background: #9bdbdb; }
.pop-close { grid-column: 1 / 3; border-top: 1px solid #000; background: #54b8a0; padding: 2px 2px 1px; }
.pop-close button { width: 100%; height: 25px; background: #9bdbdb; border: 2px solid #4f9090; border-top-color: #c0fff8; border-left-color: #c0fff8; font-size: 15px; }
.r90 { transform: rotate(90deg); }
.r180 { transform: rotate(180deg); }
.r270 { transform: rotate(270deg); }

/* Tool palette */
.right { width: 164px; display: flex; flex-direction: column; border-right: 2px solid #a8e8d8; background: #000; }
.tools { display: grid; grid-template-columns: repeat(4, 38px); gap: 2px; padding: 1px 1px 0; background: #000; border: 2px solid #2f6d5d; border-right: 0; }
.cyan { border-bottom: 3px solid #a8e8d8; }
.grey { border-color: #555; padding-bottom: 1px; }
.tools button { width: 38px; height: 38px; display: grid; place-items: center; background: #9bdbdb; border: 3px solid #4c8a8a; border-top-color: #c8f4f0; border-left-color: #c8f4f0; }
.tools svg { width: 30px; height: 30px; border: 1px solid #000; }
.tools .alert { background: #a82020; border: 2px solid #7c5050; border-top-color: #f4d8d8; border-left-color: #f4d8d8; }
.alert svg { background: #9bdbdb; }
.grey button { background: #d0d0d0; border-color: #808080; border-top-color: #f0f0f0; border-left-color: #f0f0f0; }
.grey .white { background: #fff; border-color: #a0a0a0; border-top-color: #e0e0e0; border-left-color: #e0e0e0; }
.grey .dark svg { border-color: #fff; }
.grey .orange { background: #ffc650; border-color: #a07830; border-top-color: #ffe0a0; border-left-color: #ffe0a0; }
.overview { flex: 1; contain: size; border-left: 2px solid #2f6d5d; border-top: 2px solid #2f6d5d; border-bottom: 2px solid #a8e8d8; }
.overview svg { width: 100%; height: 100%; overflow: visible; }
.coords { height: 44px; background: #54ceb0; border: 2px solid #2f6d5d; border-right: 0; border-bottom-color: #a8e8d8; padding: 5px 2px; font-size: 15px; line-height: 15px; display: flex; flex-direction: column; }

/* Command line */
.status { height: 35px; margin-right: 8px; padding: 1px 0 2px; background: #000; display: flex; align-items: stretch; border-right: 1px solid #000; position: relative; }
.status::after, .message::after { content: ""; position: absolute; left: 100%; top: 0; width: 9px; height: 100%; background: #8095b4; border-left: 2px solid #d0e4f0; }
.sb { width: 30px; margin-right: 2px; background: #ffffcc; display: grid; place-items: center; border: 2px solid #ffffcc; box-shadow: inset -1px -1px #a8a888, inset 1px 1px #c8c8a0; }
.sb svg { width: 20px; height: 20px; border: 1px solid #000; }
.sb.first { width: 24px; }
.sb.first svg { margin-left: -6px; }
.sb.teal { width: 28px; border: 3px solid #54b8a0; background: #f0ecc0; }
.sb.teal svg { width: 16px; }
.status label, .status p { background: #ffffcc; line-height: 32px; font-size: 12px; }
.status label { width: 47px; padding-left: 2px; border-right: 1px solid #54b8a0; white-space: nowrap; }
.xy { position: relative; margin: 0 2px 0 1px; background: #ffffcc; padding: 2px; display: flex; }
.xy input { width: 168px; border: 2px solid #c8c8a0; border-top-color: #88886c; border-left-color: #88886c; padding-left: 6px; }
.xy i { position: absolute; left: 8px; top: 5px; height: 15px; border-left: 1px dotted #000; }
.sb.bang { margin-right: 3px; }
.status p { flex: 1; padding-left: 1px; }
.unit { width: 78px; margin-left: 2px; background: #54ceb0; padding: 2px 2px 2px 6px; }
.unit button { width: 70px; height: 28px; display: flex; align-items: center; justify-content: space-between; padding: 0 4px 0 5px; font-size: 15px; border: 2px solid #2f6d5d; border-top-color: #a8f0d8; border-left-color: #a8f0d8; }
.unit i { width: 12px; height: 8px; border: 2px solid #2f7d66; border-top-color: #a8f0d8; border-left-color: #a8f0d8; }
.message { height: 30px; margin-right: 8px; background: #b4ffff; border-top: 3px solid #6f8c8c; border-bottom: 2px solid #203838; box-shadow: inset 0 2px #dcffff, inset 0 -1px #dcffff, inset 0 -3px #5f9c9c; position: relative; }
.message p { text-align: center; padding-right: 28px; line-height: 22px; }
.ime { position: absolute; right: 92px; top: 0; width: 79px; height: 26px; background: linear-gradient(#888c8c, #606464 50%, #3c4444); }

/* Taskbar */
.taskbar { height: 41px; padding: 2px 2px 1px 8px; display: flex; gap: 4px; background: linear-gradient(90deg, #1c3348, #2c4c6c 900px, #284a70 1300px, #182a40 100%); border-top: 1px solid #101820; box-shadow: inset 0 1px #48607c; }
.start { width: 38px; margin-right: 10px; display: grid; place-items: center; }
.start svg { width: 38px; height: 38px; }
.app { width: 58px; display: grid; place-items: center; border: 1px solid #8c9aa8; border-radius: 3px; background: linear-gradient(160deg, #7c8894, #5a6878 45%, #36485c 50%, #3c4c60); }
.app svg { width: 36px; height: 34px; }
.app.stack { width: 50px; margin-right: 8px; box-shadow: 2px 0 #36485c, 3px 0 #8c9aa8, 5px 0 #36485c, 6px 0 #8c9aa8; }
.app.on { background: linear-gradient(160deg, #c8ccd4, #98a0ac 50%, #8890a0); }
.tray { margin-left: auto; display: flex; align-items: center; gap: 12px; color: #fff; }
.tray svg { width: 84px; height: 20px; }
.tray time { font: 13px/18px "Open Sans", sans-serif; display: flex; flex-direction: column; align-items: center; width: 66px; margin-left: 2px; }
.desk { width: 13px; height: 38px; margin-left: -8px; border: 1px solid #708090; background: #24344a; }
```
